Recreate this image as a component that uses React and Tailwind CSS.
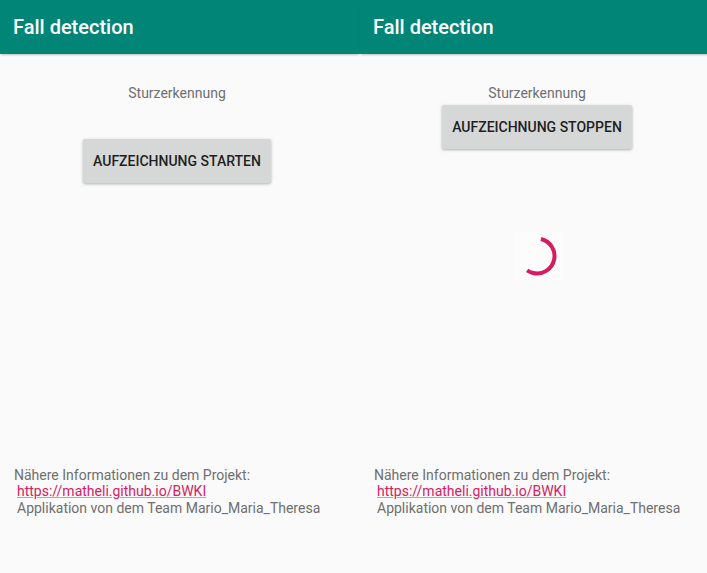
const font = { fontFamily: "Roboto, 'Liberation Sans', sans-serif" };

function Spinner() {
  // arc of ~200deg, starting near the top and running clockwise
  const r = 17.5;
  const c = 2 * Math.PI * r;
  return (
    <div className="flex h-12 w-12 items-center justify-center bg-[#fcfcfc]">
      <svg width="48" height="48" viewBox="0 0 48 48">
        <circle
          cx="24"
          cy="24"
          r={r}
          fill="none"
          stroke="#d81b60"
          strokeWidth="4"
          strokeDasharray={`${(c * 200) / 360} ${c}`}
          transform="rotate(-77 24 24)"
        />
      </svg>
    </div>
  );
}

function Footer() {
  return (
    <div className="mt-auto pb-[57px] pl-[14px] text-[14px] leading-[16.5px] text-[#6f6f6f]">
      <p>Nähere Informationen zu dem Projekt:</p>
      <p className="pl-[3px]">
        <a className="text-[#d81b60] underline decoration-[#e98aae]" href="#">
          https://matheli.github.io/BWKI
        </a>
      </p>
      <p className="pl-[3px]">Applikation von dem Team Mario_Maria_Theresa</p>
    </div>
  );
}

function Screen({ recording }) {
  return (
    <div className="flex h-[573px] w-[360px] shrink-0 flex-col bg-[#fafafa]">
      <div className="flex h-[54px] items-center bg-[#008577] pl-[13px] shadow-[0_2px_2px_-1px_rgba(0,0,0,0.25)]">
        <h1 className="text-[20px] font-medium text-white">Fall detection</h1>
      </div>
      <div className="flex w-[354px] flex-col items-center">
        <p className="mt-[30px] text-[14px] leading-[18px] text-[#6f6f6f]">Sturzerkennung</p>
        <button
          className={`${recording ? "mt-[3px]" : "mt-[37px]"} h-[44px] rounded-[2px] bg-[#d6d7d7] px-[10px] text-[14px] font-medium uppercase text-[#1f1f1f] shadow-[0_1px_3px_rgba(0,0,0,0.3)]`}
        >
          {recording ? "Aufzeichnung stoppen" : "Aufzeichnung starten"}
        </button>
        {recording && (
          <div className="mt-[83px]">
            <Spinner />
          </div>
        )}
      </div>
      <Footer />
    </div>
  );
}

export default function App() {
  return (
    <div className="flex h-[573px] w-[707px] overflow-hidden bg-[#fafafa]" style={font}>
      <Screen recording={false} />
      <Screen recording={true} />
    </div>
  );
}
